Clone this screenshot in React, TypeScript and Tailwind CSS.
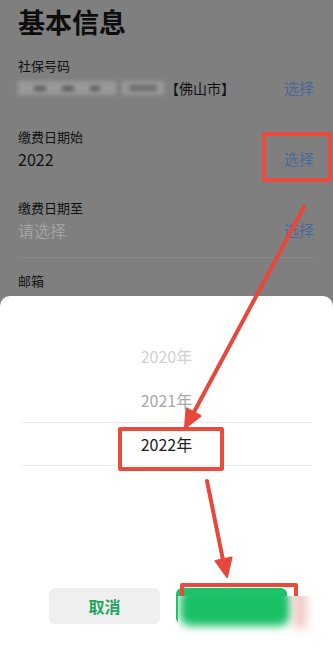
export default function App() {
  return (
    <div className="relative h-[654px] w-[333px] overflow-hidden bg-[#7f7f7f] font-['Noto_Sans_CJK_SC',sans-serif] text-[#111]">
      {/* dimmed page */}
      <div className="px-[18px]">
        <div className="pt-[5px] text-[27px] font-bold leading-[34px] text-[#0d0d0d]">基本信息</div>

        <div className="mt-[18px]">
          <div className="h-[18px] text-[13px] leading-[18px]">社保号码</div>
          <div className="mt-[2px] flex h-[22px] items-center justify-between">
            <div className="flex items-center">
              {/* masked number */}
              <div className="flex h-[14px] w-[147px] gap-[6px] blur-[2px]">
                <div className="flex w-[98px] items-center justify-evenly bg-[#9a9a9a]">
                  <div className="h-[5px] w-[12px] bg-[#5a5a5a]" />
                  <div className="h-[5px] w-[12px] bg-[#5a5a5a]" />
                  <div className="h-[5px] w-[10px] bg-[#5a5a5a]" />
                </div>
                <div className="flex w-[42px] items-center justify-center bg-[#9a9a9a]">
                  <div className="h-[6px] w-[28px] bg-[#6a6a6a]" />
                </div>
              </div>
              <span className="text-[14px] leading-[22px]">【佛山市】</span>
            </div>
            <span className="pr-[1px] text-[15px] text-[#4b6896]">选择</span>
          </div>
        </div>

        <div className="mt-[29px]">
          <div className="h-[18px] text-[13px] leading-[18px]">缴费日期始</div>
          <div className="mt-[2px] flex h-[22px] items-center justify-between">
            <span className="text-[16px]">2022</span>
            <span className="pr-[1px] text-[15px] text-[#4b6896]">选择</span>
          </div>
        </div>

        <div className="mt-[29px]">
          <div className="h-[18px] text-[13px] leading-[18px]">缴费日期至</div>
          <div className="mt-[2px] flex h-[22px] items-center justify-between">
            <span className="text-[16px] text-[#a3a3a3]">请选择</span>
            <span className="pr-[1px] text-[15px] text-[#4b6896]">选择</span>
          </div>
        </div>

        <div className="mt-[16px] h-px bg-[#878787]" />

        <div className="mt-[14px] h-[18px] text-[13px] leading-[18px]">邮箱</div>
      </div>

      {/* bottom sheet */}
      <div className="absolute inset-x-0 bottom-0 top-[296px] rounded-t-[10px] bg-white">
        <div className="pt-[38px] text-center text-[16px]">
          <div className="h-[44px] leading-[44px] text-[#d2d2d2]">2020年</div>
          <div className="h-[44px] leading-[44px] text-[#a9a9a9]">2021年</div>
          <div className="mx-[21px] h-[44px] border-y border-[#ececec] leading-[42px] text-[#222]">2022年</div>
        </div>

        <div className="mt-[122px] flex gap-[16px] pl-[49px]">
          <div className="flex h-[36px] w-[111px] items-center justify-center rounded-[6px] bg-[#efefef] text-[16px] font-bold text-[#23a55f]">
            取消
          </div>
          <div className="h-[36px] w-[111px] rounded-[6px] bg-[#1ec26b]" />
        </div>
      </div>

      {/* annotation boxes */}
      <div className="absolute left-[262px] top-[132px] h-[50px] w-[70px] rounded-[2px] border-[4px] border-[#e94b3c]" />
      <div className="absolute left-[118px] top-[427px] h-[44px] w-[106px] rounded-[2px] border-[4px] border-[#e94b3c]" />
      <div className="absolute left-[180px] top-[583px] h-[60px] w-[118px] rounded-[2px] border-[4px] border-[#e94b3c]" />

      {/* mosaic patch over the confirm button */}
      <div className="absolute left-[178px] top-[596px] flex h-[58px] w-[155px] items-start overflow-hidden bg-white">
        <div className="mt-[-8px] ml-[2px] h-[38px] w-[110px] rounded-[10px] bg-[#19c066] blur-[4px]" />
        <div className="mt-[-8px] ml-[4px] h-[40px] w-[12px] bg-[#f0c4bf] blur-[5px]" />
      </div>

      {/* arrows */}
      <svg className="pointer-events-none absolute inset-0" width="333" height="654" viewBox="0 0 333 654">
        <line x1="304" y1="207" x2="194" y2="412" stroke="#e8473b" strokeWidth="4" strokeLinecap="round" />
        <polygon points="185,428 200.5,416 186.5,408.4" fill="#e8473b" stroke="#e8473b" strokeWidth="2" strokeLinejoin="round" />
        <line x1="207" y1="481" x2="223" y2="560" stroke="#e8473b" strokeWidth="4" strokeLinecap="round" />
        <polygon points="227,577 231.5,557.5 215.5,561" fill="#e8473b" stroke="#e8473b" strokeWidth="2" strokeLinejoin="round" />
      </svg>
    </div>
  );
}
